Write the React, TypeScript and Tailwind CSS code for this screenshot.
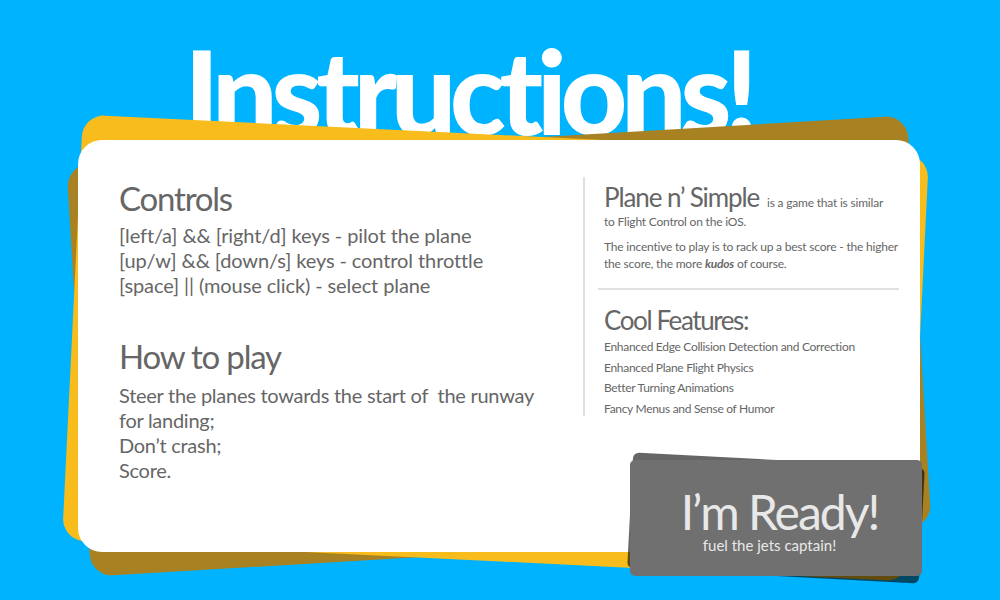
const controls = [
  '[left/a] && [right/d] keys - pilot the plane',
  '[up/w] && [down/s] keys - control throttle',
  '[space] || (mouse click) - select plane',
];

const features = [
  'Enhanced Edge Collision Detection and Correction',
  'Enhanced Plane Flight Physics',
  'Better Turning Animations',
  'Fancy Menus and Sense of Humor',
];

export default function App() {
  return (
    <div className="relative h-[600px] w-[1000px] overflow-hidden bg-[#00b3ff] font-['Lato',sans-serif] text-[#666]">
      <h1 className="h-[140px] pt-[25px] pr-[64px] text-center text-[116px] leading-[132px] font-black tracking-[-6.5px] whitespace-nowrap text-white">
        Instructions!
      </h1>

      {/* stacked sheets behind the card */}
      <div className="absolute top-[140px] left-[78px] h-[412px] w-[842px] -rotate-[3.4deg] rounded-[22px] bg-[#a88222]" />
      <div className="absolute top-[135px] left-[72px] h-[426px] w-[847px] rotate-[2.8deg] rounded-[22px] bg-[#f8bd1c]" />

      <main className="relative ml-[78px] flex h-[412px] w-[842px] rounded-[24px] bg-white">
        <section className="w-[505px] pt-[34px] pl-[41px]">
          <h2 className="text-[33px] leading-[48px] tracking-[-1.2px]">Controls</h2>
          <div className="mt-[1px] text-[20px] leading-[25px] tracking-[-0.1px]">
            {controls.map((line) => (
              <p key={line}>{line}</p>
            ))}
          </div>
          <h2 className="mt-[34px] text-[33px] leading-[48px] tracking-[-1.2px]">How to play</h2>
          <div className="mt-[3px] text-[20px] leading-[25px] tracking-[-0.27px] whitespace-pre">
            <p>Steer the planes towards the start of  the runway</p>
            <p>for landing;</p>
            <p>Don’t crash;</p>
            <p>Score.</p>
          </div>
        </section>

        <section className="mt-[37px] h-[239px] w-[316px] border-l-2 border-[#e0e0e0] pl-[13px]">
          <div className="pl-[6px] text-[12px] leading-[17px] tracking-[-0.2px]">
            <p className="-mb-[7px] pt-[3px] leading-[34px] whitespace-nowrap">
              <span className="mr-[5px] text-[26px] tracking-[-1.1px]">Plane n’ Simple</span> is a game that is similar
            </p>
            <p>to Flight Control on the iOS.</p>
            <p className="mt-[8px] w-[300px]">
              The incentive to play is to rack up a best score - the higher the score, the more{' '}
              <em className="font-bold">kudos</em> of course.
            </p>
          </div>
          <hr className="mt-[16px] w-[301px] border-t-2 border-[#e0e0e0]" />
          <h3 className="mt-[12px] pl-[6px] text-[26px] leading-[36px] tracking-[-1.4px]">Cool Features:</h3>
          <ul className="-mt-[1px] pl-[6px] text-[12px] leading-[20.5px] tracking-[-0.3px]">
            {features.map((feature) => (
              <li key={feature}>{feature}</li>
            ))}
          </ul>
        </section>
      </main>

      {/* ready button */}
      <div className="absolute top-[460px] left-[630px] h-[116px] w-[292px] rotate-[3deg] rounded-[6px] bg-black/60" />
      <button
        type="button"
        className="absolute top-[460px] left-[630px] flex h-[116px] w-[292px] flex-col items-center rounded-[5px] bg-[#707070] pt-[27px] text-[#e8e8e8]"
      >
        <span className="ml-[7px] text-[48px] leading-[50px] tracking-[-2px]">I’m Ready!</span>
        <span className="mr-[13px] text-[15px] leading-[16px]">fuel the jets captain!</span>
      </button>
    </div>
  );
}
